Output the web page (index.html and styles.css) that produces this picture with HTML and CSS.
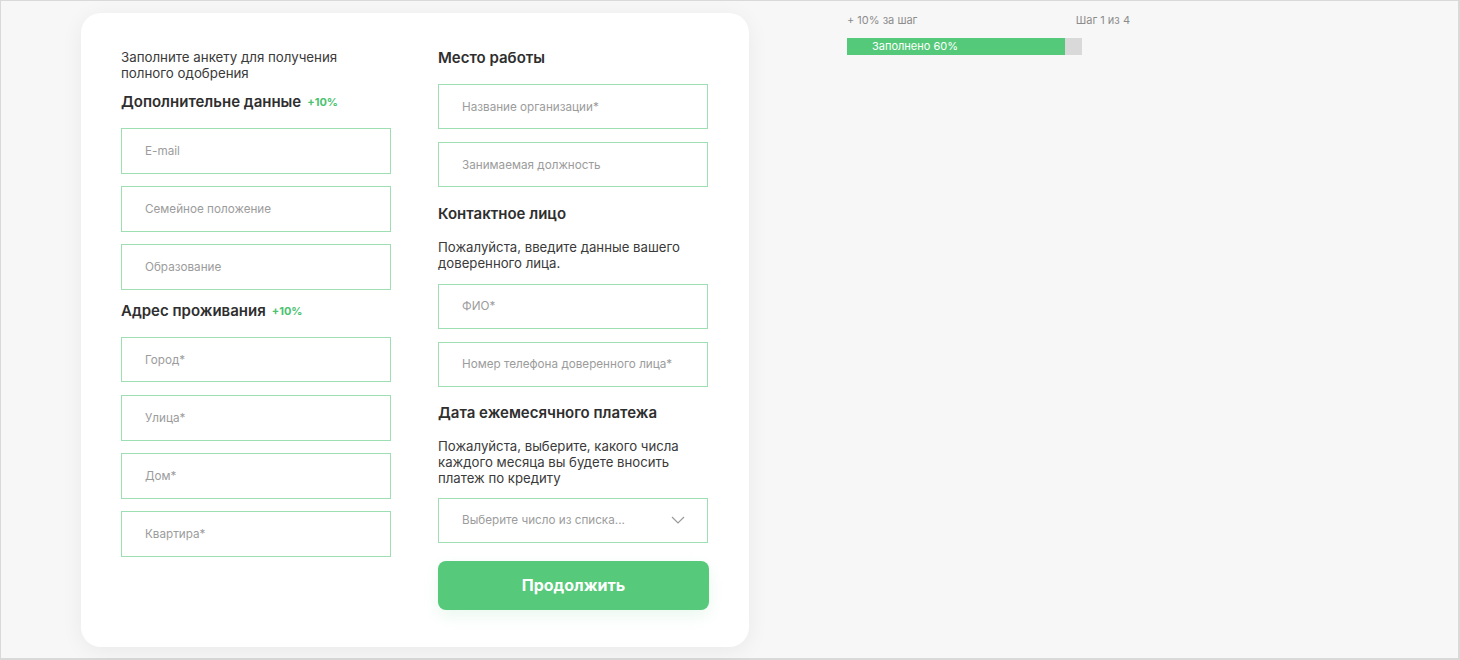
FILE: index.html
```html
<!DOCTYPE html>
<html lang="ru">
<head>
<meta charset="utf-8">
<title>Анкета</title>
<link rel="stylesheet" href="styles.css">
</head>
<body>
<div class="frame">
  <div class="card">
    <div class="col">
      <p class="intro">Заполните анкету для получения<br>полного одобрения</p>
      <h2 class="heading first">Дополнительне данные <span class="bonus">+10%</span></h2>
      <div class="fields">
        <input class="field" type="text" placeholder="E-mail">
        <input class="field" type="text" placeholder="Семейное положение">
        <input class="field" type="text" placeholder="Образование">
      </div>
      <h2 class="heading">Адрес проживания <span class="bonus">+10%</span></h2>
      <div class="fields">
        <input class="field" type="text" placeholder="Город*">
        <input class="field" type="text" placeholder="Улица*">
        <input class="field" type="text" placeholder="Дом*">
        <input class="field" type="text" placeholder="Квартира*">
      </div>
    </div>
    <div class="col col-right">
      <h2 class="heading top">Место работы</h2>
      <div class="fields">
        <input class="field" type="text" placeholder="Название организации*">
        <input class="field" type="text" placeholder="Занимаемая должность">
      </div>
      <h2 class="heading right">Контактное лицо</h2>
      <p class="note">Пожалуйста, введите данные вашего<br>доверенного лица.</p>
      <div class="fields">
        <input class="field" type="text" placeholder="ФИО*">
        <input class="field" type="text" placeholder="Номер телефона доверенного лица*">
      </div>
      <h2 class="heading right pay">Дата ежемесячного платежа</h2>
      <p class="note">Пожалуйста, выберите, какого числа<br>каждого месяца вы будете вносить<br>платеж по кредиту</p>
      <div class="select">
        <span>Выберите число из списка...</span>
        <svg class="chev" width="14" height="8" viewBox="0 0 14 8"><path d="M1 1l6 6 6-6" fill="none" stroke="#9a9a9a" stroke-width="1.2"/></svg>
      </div>
      <button class="btn" type="button">Продолжить</button>
    </div>
  </div>
  <div class="progress">
    <div class="progress-top">
      <span>+ 10% за шаг</span>
      <span>Шаг 1 из 4</span>
    </div>
    <div class="bar">
      <div class="fill" style="width: 218px">Заполнено 60%</div>
    </div>
  </div>
</div>
</body>
</html>
```

FILE: styles.css
```css
* { box-sizing: border-box; }
html, body { margin: 0; padding: 0; }
body {
  font-family: Inter, "Noto Sans", "Liberation Sans", sans-serif;
  color: #333;
  background: #f7f7f7;
}
.frame {
  width: 1460px;
  height: 660px;
  border: 1px solid #d9d9d9;
  border-right-width: 2px;
  border-bottom-width: 2px;
  background: #f7f7f7;
  display: flex;
  align-items: flex-start;
  padding: 12px 0 0 80px;
}
.card {
  width: 668px;
  height: 634px;
  background: #fff;
  border-radius: 20px;
  box-shadow: 0 4px 22px rgba(0, 0, 0, 0.06);
  padding: 36px 41px 0 40px;
  display: flex;
  gap: 47px;
}
.col {
  width: 270px;
  display: flex;
  flex-direction: column;
}
.intro, .note {
  margin: 0;
  font-size: 13.3px;
  line-height: 16px;
  color: #3a3a3a;
}
.note { line-height: 16.3px; margin-top: 15px; font-size: 13.2px; }
.heading {
  margin: 11px 0 0;
  font-size: 15px;
  line-height: 20px;
  font-weight: 600;
  color: #2e2e2e;
  display: flex;
  align-items: center;
}
.heading.top { margin-top: -1px; }
.heading.right { margin-top: 17px; }
.heading.right.pay { margin-top: 16px; }
.heading.first { margin-top: 11px; }
.bonus {
  color: #4cc270;
  font-size: 11px;
  font-weight: 700;
  margin-left: 6px;
}
.fields {
  display: flex;
  flex-direction: column;
  gap: 12.7px;
  margin-top: 16px;
}
.col-right .fields { gap: 13px; }
.note + .fields { margin-top: 12px; }
.field, .select {
  width: 270px;
  height: 45.5px;
  border: 1.5px solid #9ddfb2;
  border-radius: 0;
  background: #fff;
  padding: 0 0 0 23px;
  font-family: inherit;
  font-size: 11.7px;
  color: #333;
  outline: none;
}
.col-right .field, .col-right .select { height: 45px; }
.field::placeholder { color: #9c9c9c; }
.select {
  margin-top: 11.5px;
  display: flex;
  align-items: center;
  justify-content: space-between;
  padding-right: 22px;
  color: #9c9c9c;
}
.btn {
  margin-top: 18px;
  width: 271px;
  height: 49px;
  border: none;
  border-radius: 8px;
  background: #56c97a;
  color: #fff;
  font-family: inherit;
  font-size: 16px;
  font-weight: 700;
  box-shadow: 0 6px 16px rgba(86, 201, 122, 0.12);
}
.progress {
  margin-left: 98px;
  width: 283px;
}
.progress-top {
  display: flex;
  justify-content: space-between;
  font-size: 11px;
  line-height: 14px;
  color: #8c8c8c;
}
.bar {
  margin-top: 11px;
  width: 235px;
  height: 17px;
  background: #d9d9d9;
}
.fill {
  height: 17px;
  background: #55c97a;
  color: #fff;
  font-size: 11px;
  line-height: 17px;
  padding-left: 25px;
}
```
